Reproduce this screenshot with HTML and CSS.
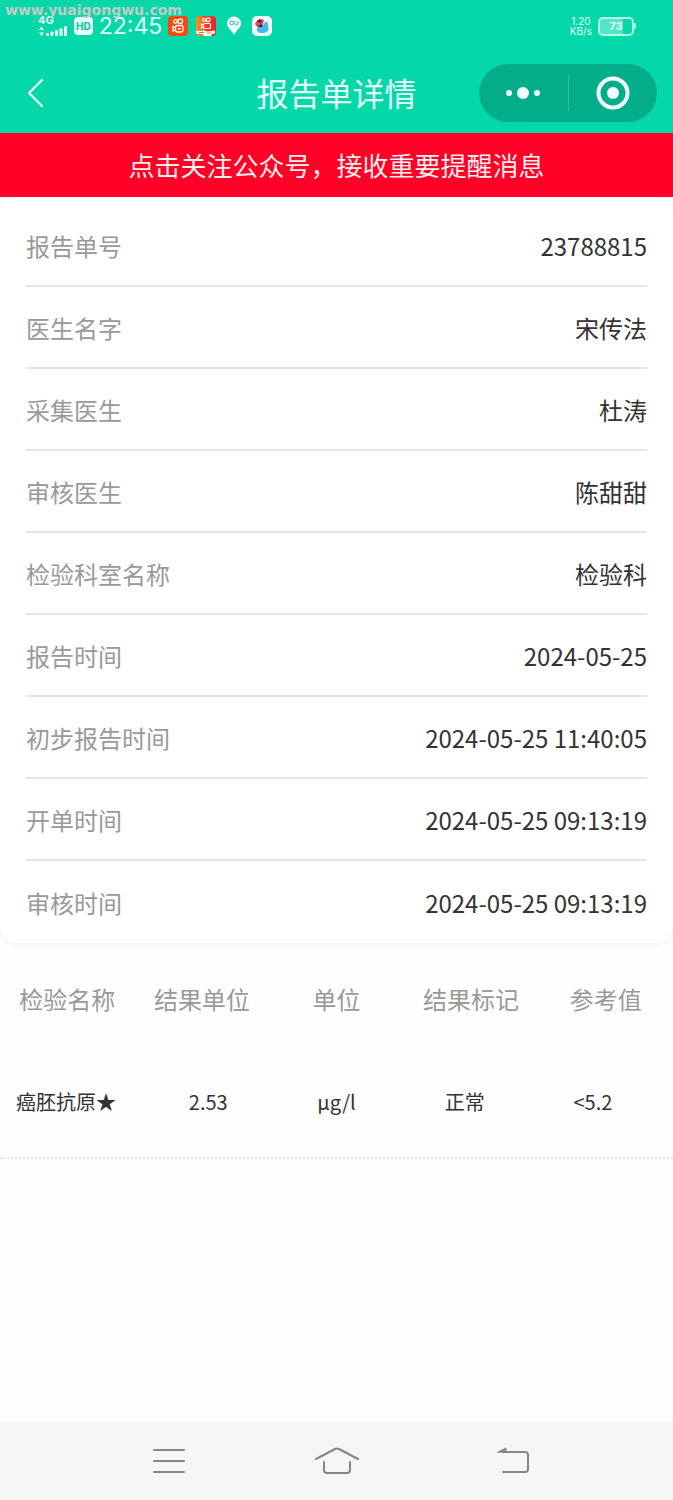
FILE: index.html
```
<!DOCTYPE html>
<html lang="zh-CN">
<head>
<meta charset="UTF-8">
<meta name="viewport" content="width=device-width, initial-scale=1.0">
<title>报告单详情</title>
<link rel="stylesheet" href="styles.css">
</head>
<body>

<div class="watermark">www.yuaigongwu.com</div>

<header class="header">
  <div class="status-bar">
    <div class="status-left">
      <div class="signal">
        <span class="signal-type">4G</span>
        <svg width="30" height="12" viewBox="0 0 30 12" fill="#e6fffa">
          <path d="M1 5l2.500-3.500L6 5zM1 7.500h5L3.500 11z"/>
          <rect x="8" y="8" width="3" height="3" rx="1"/>
          <rect x="12.500" y="6.500" width="3" height="4.500" rx="1"/>
          <rect x="17" y="5" width="3" height="6" rx="1"/>
          <rect x="21.500" y="3" width="3" height="8" rx="1"/>
          <rect x="26" y="1" width="3" height="10" rx="1"/>
        </svg>
      </div>
      <span class="hd">HD</span>
      <span class="time">22:45</span>
      <div class="apps">
        <svg width="20" height="20" viewBox="0 0 20 20">
          <rect width="20" height="20" rx="4" fill="#f8480c"/>
          <g fill="none" stroke="#fff" stroke-width="1.300">
            <circle cx="7.500" cy="5.500" r="1.800"/>
            <circle cx="12.300" cy="5.200" r="2.300"/>
            <rect x="7.500" y="9.500" width="7.500" height="6.500" rx="1.800"/>
            <path d="M7.500 11.500l-2.500-1v4.500l2.500-1"/>
          </g>
          <rect x="10" y="12" width="2.500" height="1.500" fill="#fff"/>
        </svg>
        <svg width="20" height="20" viewBox="0 0 20 20">
          <defs>
            <linearGradient id="warm" x1="0" x2="1">
              <stop offset="0" stop-color="#ff9a1a"/>
              <stop offset="0.500" stop-color="#f8401c"/>
              <stop offset="1" stop-color="#e8202c"/>
            </linearGradient>
          </defs>
          <rect width="20" height="20" rx="4" fill="url(#warm)"/>
          <g fill="none" stroke="#fff" stroke-width="1.200">
            <circle cx="8" cy="4" r="1.500"/>
            <circle cx="12" cy="3.800" r="1.900"/>
            <rect x="7.500" y="7.500" width="7" height="5" rx="1.300"/>
            <path d="M7.500 9l-2-1v4l2-1"/>
          </g>
          <path d="M0 15l9-.5 2 1 8-1v3l-3 .5-1 2H8l-2-2-6-.500z" fill="#fff"/>
          <path d="M3 16.500h5M11 17h4" stroke="#f46a3c"/>
        </svg>
        <svg width="20" height="20" viewBox="0 0 20 20">
          <path d="M10 19C8 14.500 3 12 3 7.500a7 7 0 0 1 14 0C17 12 12 14.500 10 19z" fill="#f4fffc"/>
          <g fill="none" stroke="#55cdb2" stroke-width="1.200">
            <circle cx="7.700" cy="7" r="1.800"/>
            <path d="M11 5v2.500a1.500 1.500 0 0 0 3 0V5"/>
          </g>
        </svg>
        <svg width="20" height="20" viewBox="0 0 20 20">
          <rect width="20" height="20" rx="5" fill="#f4fdff"/>
          <path d="M3 8c1-4 6-6 9-4l-1 4-5 4z" fill="#ef4050"/>
          <path d="M5 5l3-2 2 3-3 1z" fill="#42303f"/>
          <path d="M13 6c3-1 3 2 3 4 2 4-1 7-5 7-4 .500-7-2-6-5l4 0 3-4z" fill="#45b6ee"/>
          <path d="M6 10l4-2 1 2-3 2z" fill="#27334e"/>
        </svg>
      </div>
    </div>
    <div class="status-right">
      <div class="speed"><span>1.20</span><span>KB/s</span></div>
      <div class="battery"><span class="battery-level">73</span></div>
    </div>
  </div>

  <div class="nav">
    <button class="back" type="button" aria-label="返回">
      <svg width="20" height="32" viewBox="0 0 20 32" fill="none" stroke="#e6fffa" stroke-width="2.400" stroke-linecap="round" stroke-linejoin="round">
        <path d="M16 3L3 16l13 13"/>
      </svg>
    </button>
    <h1 class="title">报告单详情</h1>
    <div class="capsule">
      <button class="capsule-btn" type="button" aria-label="更多">
        <svg width="40" height="36" viewBox="0 0 40 36" fill="#f2fffd">
          <circle cx="6" cy="18" r="3"/>
          <circle cx="20" cy="18" r="6"/>
          <circle cx="34" cy="18" r="3"/>
        </svg>
      </button>
      <button class="capsule-btn" type="button" aria-label="关闭">
        <svg width="36" height="36" viewBox="0 0 36 36">
          <circle cx="18" cy="18" r="14.500" fill="none" stroke="#f2fffd" stroke-width="4"/>
          <circle cx="18" cy="18" r="6" fill="#f2fffd"/>
        </svg>
      </button>
    </div>
  </div>
</header>

<a class="notice" href="#">点击关注公众号，接收重要提醒消息</a>

<main class="main">
  <dl class="info">
    <div class="info-row"><dt>报告单号</dt><dd>23788815</dd></div>
    <div class="info-row"><dt>医生名字</dt><dd>宋传法</dd></div>
    <div class="info-row"><dt>采集医生</dt><dd>杜涛</dd></div>
    <div class="info-row"><dt>审核医生</dt><dd>陈甜甜</dd></div>
    <div class="info-row"><dt>检验科室名称</dt><dd>检验科</dd></div>
    <div class="info-row"><dt>报告时间</dt><dd>2024-05-25</dd></div>
    <div class="info-row"><dt>初步报告时间</dt><dd>2024-05-25 11:40:05</dd></div>
    <div class="info-row"><dt>开单时间</dt><dd>2024-05-25 09:13:19</dd></div>
    <div class="info-row"><dt>审核时间</dt><dd>2024-05-25 09:13:19</dd></div>
  </dl>

  <table class="result">
    <thead>
      <tr>
        <th>检验名称</th>
        <th>结果单位</th>
        <th>单位</th>
        <th>结果标记</th>
        <th>参考值</th>
      </tr>
    </thead>
    <tbody>
      <tr>
        <td>癌胚抗原★</td>
        <td>2.53</td>
        <td>μg/l</td>
        <td>正常</td>
        <td>&lt;5.2</td>
      </tr>
    </tbody>
  </table>
</main>

<nav class="system-nav">
  <button type="button" aria-label="菜单">
    <svg width="52" height="32" viewBox="-4 0 52 32" fill="none" stroke="#868686" stroke-width="2" stroke-linecap="round">
      <path d="M7 5h30M7 16h30M7 27h30"/>
    </svg>
  </button>
  <button type="button" aria-label="主页">
    <svg width="52" height="32" viewBox="-4 0 52 32" fill="none" stroke="#868686" stroke-width="2" stroke-linecap="round">
      <path d="M1 14L20 4q2-1 4 0l19 10M9 17v8q0 3 3 3h20q3 0 3-3v-8"/>
    </svg>
  </button>
  <button type="button" aria-label="返回">
    <svg width="52" height="32" viewBox="-8 0 52 32" fill="none" stroke="#868686" stroke-width="2" stroke-linecap="round">
      <path d="M17 7h21q3 0 3 3v14q0 3-3 3H16"/>
      <path d="M11 7l8-4v4z" fill="#868686" stroke-width="1"/>
    </svg>
  </button>
</nav>

</body>
</html>
```
FILE: styles.css
```
* {
  box-sizing: border-box;
}

body {
  margin: 0;
  min-height: 100vh;
  display: flex;
  flex-direction: column;
  position: relative;
  background: #fefefe;
  color: #333;
  font-family: "Noto Sans CJK SC", sans-serif;
  font-size: 24px;
}

button {
  display: flex;
  align-items: center;
  justify-content: center;
  padding: 0;
  border: 0;
  background: none;
}

svg {
  display: block;
}

.watermark {
  position: absolute;
  top: 3px;
  left: 5px;
  color: #c9c9c9;
  font: bold 14px/14px "DejaVu Sans", sans-serif;
}

/* header */
.header {
  background: #04d8a8;
  color: #e6fffa;
}

.status-bar {
  display: flex;
  justify-content: space-between;
  height: 52px;
  padding: 0 37px 0 38px;
  font-family: Inter, sans-serif;
}

.status-left,
.status-right {
  display: flex;
  align-items: center;
  gap: 6px;
}

.signal-type {
  display: block;
  font-size: 11px;
  line-height: 10px;
  font-weight: bold;
}

.hd {
  padding: 0 2px;
  border-radius: 4px;
  background: #e6fffa;
  color: #04c498;
  font-size: 10px;
  line-height: 18px;
  font-weight: bold;
}

.time {
  font-size: 23px;
  line-height: 20px;
}

.apps {
  display: flex;
  gap: 8px;
}

.speed {
  display: flex;
  flex-direction: column;
  align-items: center;
  font-size: 10px;
  line-height: 10px;
}

.battery {
  display: flex;
  align-items: center;
}

.battery-level {
  width: 36px;
  border: 2px solid #b4fbe9;
  border-radius: 5px;
  background: linear-gradient(to right, #50e6c6 73%, transparent 73%);
  font-size: 11px;
  line-height: 15px;
  font-weight: bold;
  text-align: center;
}

.battery::after {
  content: "";
  width: 2px;
  height: 6px;
  border-radius: 0 2px 2px 0;
  background: #b4fbe9;
}

.nav {
  display: grid;
  grid-template-columns: 1fr auto 1fr;
  align-items: center;
  height: 81px;
  padding: 0 16px;
}

.back {
  justify-self: start;
  margin-left: 10px;
}

.title {
  margin: 0;
  padding-bottom: 2px;
  font-size: 32px;
  line-height: 40px;
  font-weight: 400;
}

.capsule {
  justify-self: end;
  display: flex;
  align-items: center;
  width: 178px;
  height: 58px;
  border-radius: 29px;
  background: #04ad89;
}

.capsule-btn {
  flex: 1;
  height: 36px;
}

.capsule-btn + .capsule-btn {
  border-left: 1px solid #2fc2a2;
}

.notice {
  background: #ff0026;
  color: #fff0ee;
  font-size: 26px;
  line-height: 64px;
  text-align: center;
  text-decoration: none;
}

/* report info */
.main {
  flex: 1;
}

.info {
  margin: 0;
  padding: 8px 26px 0;
  border-radius: 16px;
  background: #fff;
  box-shadow: 0 2px 4px rgba(0, 0, 0, 0.05);
}

.info-row {
  display: flex;
  align-items: center;
  justify-content: space-between;
  height: 82px;
  border-bottom: 2px solid #e4e4e4;
}

.info-row:last-child {
  border-bottom: 0;
}

.info-row dt {
  color: #999;
}

.info-row dd {
  margin: 0;
}

/* result table */
.result,
.result thead,
.result tbody {
  display: block;
}

.result {
  padding-top: 8px;
}

.result tr {
  display: flex;
  align-items: center;
}

.result th,
.result td {
  flex: 1 0 0;
  padding: 0;
  text-align: center;
  white-space: nowrap;
}

.result th {
  color: #999;
  font-weight: 400;
  line-height: 96px;
}

.result tbody tr {
  padding: 0 16px;
  border-bottom: 2px dotted #e4e4e4;
}

.result td {
  font-size: 20px;
  line-height: 110px;
}

.result td:first-child {
  text-align: left;
}

/* bottom bar */
.system-nav {
  display: flex;
  align-items: center;
  justify-content: center;
  gap: 116px;
  height: 78px;
  background: #f6f6f6;
}
```
